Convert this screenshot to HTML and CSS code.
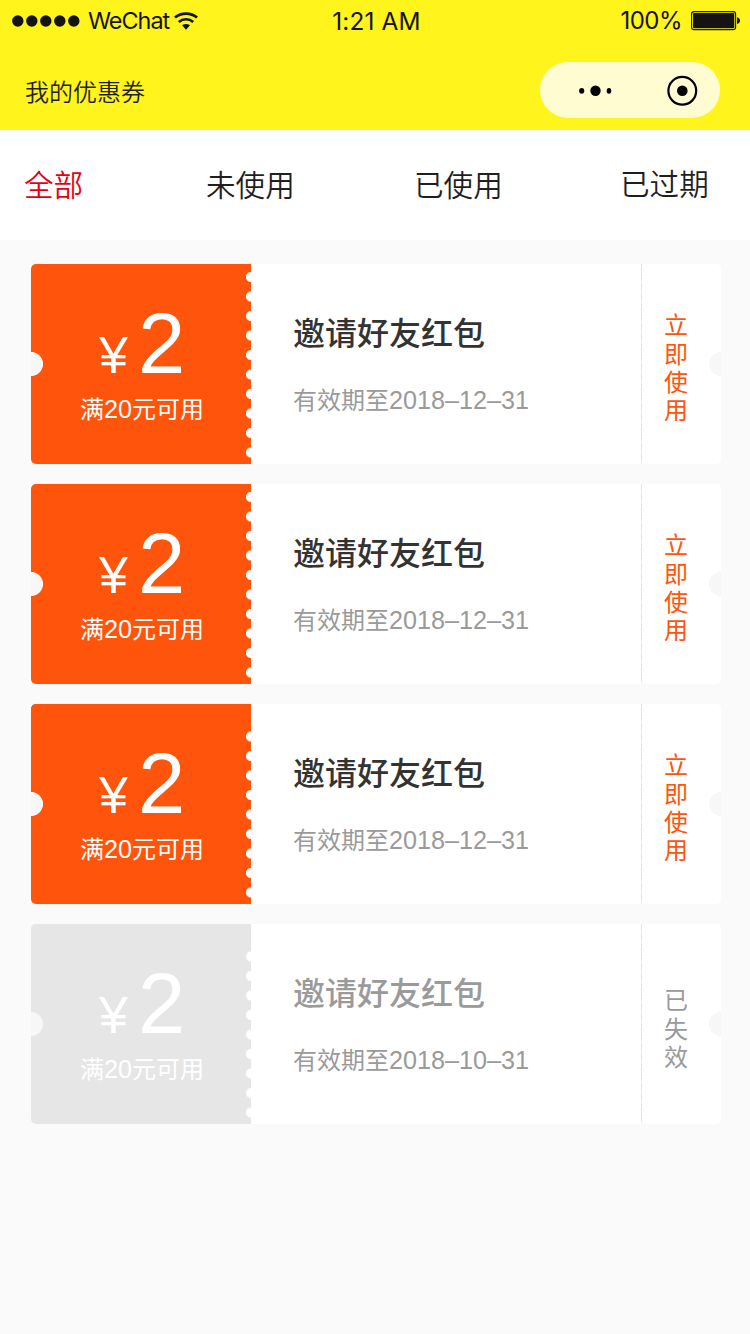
FILE: index.html
```
<!DOCTYPE html>
<html lang="zh-CN">
<head>
<meta charset="utf-8">
<title>我的优惠券</title>
<link rel="stylesheet" href="styles.css">
</head>
<body>
<header class="header">
  <div class="status">
    <div class="carrier">
      <svg class="signal" width="68" height="12" viewBox="0 0 68 12"><g fill="#141414"><circle cx="5.8" cy="6" r="5.7"/><circle cx="19.8" cy="6" r="5.7"/><circle cx="33.8" cy="6" r="5.7"/><circle cx="47.8" cy="6" r="5.7"/><circle cx="61.8" cy="6" r="5.7"/></g></svg>
      <span class="carrier-name">WeChat</span>
      <svg class="wifi" width="24" height="18" viewBox="0 0 24 18"><g fill="none" stroke="#141414" stroke-width="2.7"><path d="M1 5.6C7 .2 17 .2 23 5.6"/><path d="M4.8 10C9 6.3 15 6.3 19.2 10"/></g><path d="M8 13.2Q12 10.6 16 13.2L12 17.8Z" fill="#141414"/></svg>
    </div>
    <div class="clock">1:21 AM</div>
    <div class="power">
      <span class="percent">100%</span>
      <svg width="50" height="20" viewBox="0 0 50 20"><rect x=".6" y=".6" width="44" height="18" rx="2.4" fill="none" stroke="#141414" stroke-width="1.1"/><rect x="2" y="2" width="41.3" height="15.2" rx="1" fill="#141414"/><path d="M46 6.2q3 .6 3 3.4t-3 3.4z" fill="#141414"/></svg>
    </div>
  </div>
  <div class="navbar">
    <h1 class="page-title">我的优惠券</h1>
    <div class="capsule">
      <svg width="180" height="56" viewBox="0 0 180 56"><ellipse cx="41.7" cy="28.8" rx="2.6" ry="2.9"/><circle cx="55.5" cy="28.8" r="5.2"/><ellipse cx="69" cy="28.8" rx="2.3" ry="2.9"/><circle cx="142.3" cy="28.8" r="13.9" fill="none" stroke="#000" stroke-width="2.2"/><circle cx="142.3" cy="28.8" r="5.3"/></svg>
    </div>
  </div>
</header>
<nav class="tabs">
  <span class="tab active">全部</span>
  <span class="tab">未使用</span>
  <span class="tab">已使用</span>
  <span class="tab raised">已过期</span>
</nav>
<main class="coupons">
  <article class="coupon">
    <div class="value"><div class="amount"><span class="yen">¥</span><span class="num">2</span></div><div class="rule">满<span class="digits">20</span>元可用</div></div>
    <div class="info"><h2 class="name">邀请好友红包</h2><p class="expiry">有效期至<span class="digits">2018–12–31</span></p></div>
    <div class="action">立即使用</div>
  </article>
  <article class="coupon">
    <div class="value"><div class="amount"><span class="yen">¥</span><span class="num">2</span></div><div class="rule">满<span class="digits">20</span>元可用</div></div>
    <div class="info"><h2 class="name">邀请好友红包</h2><p class="expiry">有效期至<span class="digits">2018–12–31</span></p></div>
    <div class="action">立即使用</div>
  </article>
  <article class="coupon short">
    <div class="value"><div class="amount"><span class="yen">¥</span><span class="num">2</span></div><div class="rule">满<span class="digits">20</span>元可用</div></div>
    <div class="info"><h2 class="name">邀请好友红包</h2><p class="expiry">有效期至<span class="digits">2018–12–31</span></p></div>
    <div class="action">立即使用</div>
  </article>
  <article class="coupon short expired">
    <div class="value"><div class="amount"><span class="yen">¥</span><span class="num">2</span></div><div class="rule">满<span class="digits">20</span>元可用</div></div>
    <div class="info"><h2 class="name">邀请好友红包</h2><p class="expiry">有效期至<span class="digits">2018–10–31</span></p></div>
    <div class="action">已失效</div>
  </article>
</main>
</body>
</html>
```
FILE: styles.css
```
* { box-sizing: border-box; }
body {
  margin: 0;
  min-height: 1334px;
  background: #fafafa;
  color: #1f1f1f;
  font-family: "Noto Sans CJK SC", sans-serif;
}
h1, h2, p { margin: 0; font-weight: 400; }
svg { display: block; }

.header { height: 130px; background: #fff41c; }
.status {
  display: grid;
  grid-template-columns: 1fr auto 1fr;
  height: 41px;
  padding: 0 9px 0 12px;
  align-items: center;
  font-family: Inter, sans-serif;
  font-size: 24px;
  line-height: 40px;
  color: #141414;
}
.carrier, .power { display: flex; align-items: center; }
.carrier-name { margin-left: 8px; font-size: 23.4px; letter-spacing: -1px; }
.wifi { margin-left: 5px; }
.clock { font-size: 24.4px; letter-spacing: .15px; }
.power { justify-content: flex-end; gap: 9px; }
.percent { font-size: 24px; letter-spacing: -.5px; }
.navbar {
  display: flex;
  justify-content: space-between;
  align-items: flex-start;
  padding: 21px 30px 0 25px;
}
.page-title { padding-top: 11px; font-size: 24px; line-height: 36px; font-weight: 350; }
.capsule { height: 56px; border-radius: 28px; background: #fffcd2; }

.tabs {
  display: grid;
  grid-template-columns: 182px 208px 206px auto;
  height: 110px;
  padding: 31px 0 0 24px;
  background: #fff;
  font-size: 29.6px;
  line-height: 46px;
  font-weight: 350;
}
.active { color: #e60012; }
.raised { margin-top: -1px; }

.coupons {
  display: grid;
  gap: 20px;
  padding: 24px 29px 0 31px;
}
.coupon {
  display: flex;
  height: 200px;
  border-radius: 5px;
  overflow: hidden;
  background: #fff;
}
.value {
  width: 220px;
  padding-top: 38px;
  color: #fff;
  background:
    radial-gradient(circle at 0 100px, #f7f7f7 11.6px, transparent 12.4px),
    radial-gradient(circle at 100% 9.75px, #fff 4.7px, transparent 5.4px) 100% 3.25px / 10px 19.5px repeat-y,
    #ff540b;
}
.short .value {
  background:
    radial-gradient(circle at 0 100px, #f7f7f7 11.6px, transparent 12.4px),
    linear-gradient(#ff540b, #ff540b) 0 0 / 100% 22px no-repeat,
    radial-gradient(circle at 100% 9.75px, #fff 4.7px, transparent 5.4px) 100% 3.25px / 10px 19.5px repeat-y,
    #ff540b;
}
.expired .value {
  background:
    radial-gradient(circle at 0 100px, #f7f7f7 11.6px, transparent 12.4px),
    linear-gradient(#e6e6e6, #e6e6e6) 0 0 / 100% 22px no-repeat,
    radial-gradient(circle at 100% 9.75px, #fff 4.7px, transparent 5.4px) 100% 3.25px / 10px 19.5px repeat-y,
    #e6e6e6;
}
.amount {
  display: flex;
  align-items: baseline;
  padding-left: 68px;
  height: 87px;
  font-family: "Liberation Sans", sans-serif;
  line-height: 84px;
}
.yen { width: 39px; font-size: 52px; }
.num { font-size: 85px; }
.rule { padding-left: 49px; font-size: 24px; line-height: 38px; white-space: nowrap; }
.digits { font-family: "Liberation Sans", sans-serif; font-size: 25.2px; }

.info { width: 390px; padding: 43px 0 0 42px; }
.name { font-size: 32px; line-height: 48px; font-weight: 500; color: #333; }
.expiry { margin-top: 26px; font-size: 24px; line-height: 36px; color: #9a9a9a; }

.action {
  display: flex;
  align-items: center;
  width: 80px;
  padding: 6px 31px 0 23px;
  font-size: 24px;
  line-height: 28.4px;
  color: #ff540b;
  word-break: break-all;
  background:
    radial-gradient(circle at 80px 100px, #f7f7f7 11.6px, transparent 12.4px),
    repeating-linear-gradient(#e2e2e2 0 7px, #fff 7px 8px, #e2e2e2 8px 9px, #fff 9px 10px) 0 0 / 1px 100% no-repeat;
}
.expired .action { padding-top: 8px; }
.expired .name, .expired .action { color: #9a9a9a; }
```
